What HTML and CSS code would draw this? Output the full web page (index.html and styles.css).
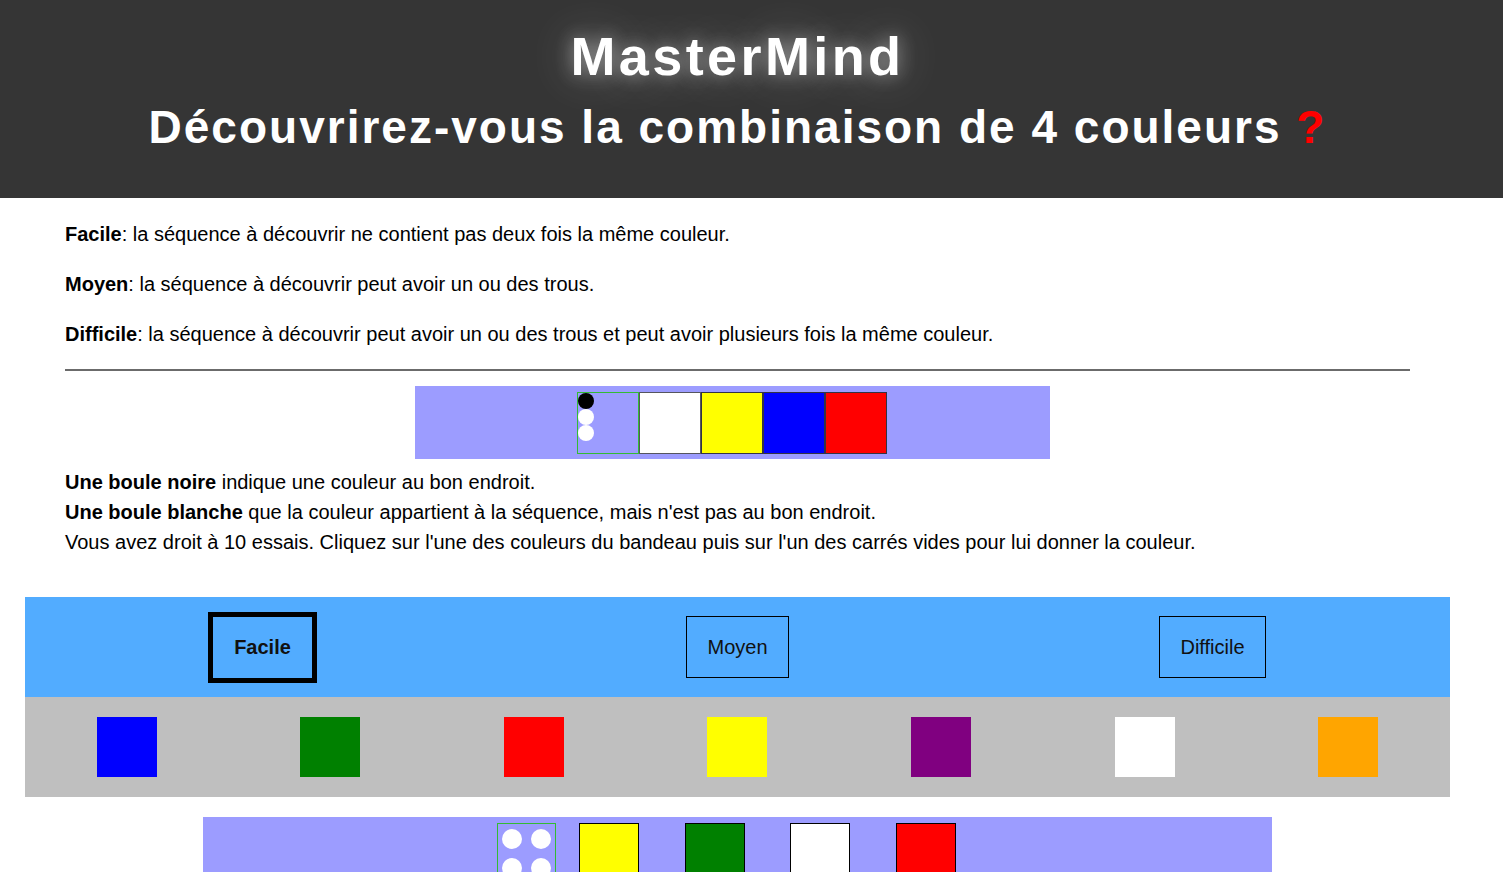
FILE: index.html
```html
<!DOCTYPE html>
<html lang="fr">
<head>
<meta charset="utf-8">
<title>MasterMind</title>
<link rel="stylesheet" href="styles.css">
</head>
<body>
<header class="top">
  <div class="top-inner">
    <h1 class="title">MasterMind</h1>
    <h2 class="subtitle">Découvrirez-vous la combinaison de 4 couleurs <span class="q">?</span></h2>
  </div>
</header>
<main class="page">
  <section class="rules">
    <p class="rule"><b>Facile</b>: la séquence à découvrir ne contient pas deux fois la même couleur.</p>
    <p class="rule"><b>Moyen</b>: la séquence à découvrir peut avoir un ou des trous.</p>
    <p class="rule"><b>Difficile</b>: la séquence à découvrir peut avoir un ou des trous et peut avoir plusieurs fois la même couleur.</p>
    <hr class="sep">
    <div class="example">
      <div class="ex-feedback">
        <span class="ex-ball ball-black"></span>
        <span class="ex-ball ball-white"></span>
        <span class="ex-ball ball-white"></span>
      </div>
      <div class="ex-peg c-white"></div>
      <div class="ex-peg c-yellow"></div>
      <div class="ex-peg c-blue"></div>
      <div class="ex-peg c-red"></div>
    </div>
    <p class="legend"><b>Une boule noire</b> indique une couleur au bon endroit.<br><b>Une boule blanche</b> que la couleur appartient à la séquence, mais n'est pas au bon endroit.<br>Vous avez droit à 10 essais. Cliquez sur l'une des couleurs du bandeau puis sur l'un des carrés vides pour lui donner la couleur.</p>
  </section>

  <nav class="levels">
    <div class="level-cell"><button class="level level-active">Facile</button></div>
    <div class="level-cell"><button class="level">Moyen</button></div>
    <div class="level-cell"><button class="level">Difficile</button></div>
  </nav>

  <div class="palette">
    <div class="swatch-cell"><div class="swatch c-blue"></div></div>
    <div class="swatch-cell"><div class="swatch c-green"></div></div>
    <div class="swatch-cell"><div class="swatch c-red"></div></div>
    <div class="swatch-cell"><div class="swatch c-yellow"></div></div>
    <div class="swatch-cell"><div class="swatch c-purple"></div></div>
    <div class="swatch-cell"><div class="swatch c-white"></div></div>
    <div class="swatch-cell"><div class="swatch c-orange"></div></div>
  </div>

  <div class="board">
    <div class="board-row">
      <div class="feedback">
        <span class="fb-ball ball-white"></span>
        <span class="fb-ball ball-white"></span>
        <span class="fb-ball ball-white"></span>
        <span class="fb-ball ball-white"></span>
      </div>
      <div class="peg c-yellow"></div>
      <div class="peg c-green"></div>
      <div class="peg c-white"></div>
      <div class="peg c-red"></div>
    </div>
    <div class="board-row">
      <div class="feedback"></div>
      <div class="peg c-empty"></div>
      <div class="peg c-empty"></div>
      <div class="peg c-empty"></div>
      <div class="peg c-empty"></div>
    </div>
  </div>
</main>
</body>
</html>
```
FILE: styles.css
```css
* { box-sizing: border-box; }

html, body {
  margin: 0;
  padding: 0;
  background: #ffffff;
  color: #000000;
  font-family: "Liberation Sans", Arial, sans-serif;
}

/* ---------- header ---------- */
.top {
  background: #353535;
  height: 198px;
  overflow: hidden;
}
.top-inner {
  width: 1475px;
  padding-top: 26px;
  text-align: center;
  color: #ffffff;
}
.title {
  margin: 0;
  font-size: 54px;
  line-height: 60px;
  font-weight: bold;
  letter-spacing: 3.4px;
  text-shadow: 0 0 18px rgba(255,255,255,0.45), 0 0 45px rgba(255,255,255,0.35), 0 10px 110px rgba(255,255,255,0.12);
}
.subtitle {
  margin: 13px 0 0;
  font-size: 46px;
  line-height: 56px;
  font-weight: bold;
  letter-spacing: 2px;
}
.q { color: #ff0000; }

/* ---------- page ---------- */
.page {
  width: 1475px;
}
.rules {
  padding: 1px 65px 0;
  font-size: 20px;
  line-height: 30px;
}
.rule {
  margin: 20px 0;
}
.sep {
  margin: 0;
  height: 0;
  border: 0;
  border-top: 2px solid #6b6b6b;
}

/* example row */
.example {
  margin: 15px 0 0 350px;
  width: 635px;
  height: 73px;
  background: #9c9cff;
  padding: 6px 0 0 162px;
  display: flex;
}
.ex-feedback {
  width: 62px;
  height: 62px;
  border: 1px solid #33bb33;
  display: flex;
  flex-direction: column;
}
.ex-ball {
  width: 16px;
  height: 16px;
  border-radius: 50%;
}
.ex-peg {
  width: 62px;
  height: 62px;
  border: 1px solid #333344;
}
.ex-peg.c-white { border-color: #55555f; }

.legend {
  margin: 8px 0 0;
}

.ball-black { background: #000000; }
.ball-white { background: #ffffff; }

/* ---------- level buttons ---------- */
.levels {
  margin: 40px 25px 0;
  height: 100px;
  background: #52acff;
  display: grid;
  grid-template-columns: repeat(3, 1fr);
  align-items: center;
}
.level-cell {
  display: flex;
  justify-content: center;
}
.level {
  font-family: "Liberation Sans", Arial, sans-serif;
  font-size: 20px;
  line-height: 22px;
  color: #111111;
  background: transparent;
  border: 1px solid #000000;
  padding: 19px 20px;
  margin: 0;
}
.level-active {
  border-width: 5px;
  font-weight: bold;
  padding: 19px 21px 20px;
}

/* ---------- palette ---------- */
.palette {
  margin: 0 25px;
  height: 100px;
  background: #bfbfbf;
  display: grid;
  grid-template-columns: repeat(7, 1fr);
  align-items: center;
}
.swatch-cell {
  display: flex;
  justify-content: center;
}
.swatch {
  width: 60px;
  height: 60px;
}

/* ---------- board ---------- */
.board {
  margin: 20px auto 0;
  width: 1069px;
  background: #9c9cff;
  padding: 6px 0 20px 294px;
}
.board-row {
  display: flex;
  gap: 45.7px;
  margin-bottom: 20px;
}
.feedback {
  width: 59px;
  height: 60px;
  border: 1px solid #33bb33;
  padding: 5px 0 0 4px;
  display: grid;
  grid-template-columns: 20px 20px;
  grid-auto-rows: 20px;
  column-gap: 9px;
  row-gap: 9px;
  margin-right: -22.7px;
}
.fb-ball {
  width: 20px;
  height: 20px;
  border-radius: 50%;
}
.peg {
  width: 60px;
  height: 60px;
  border: 1px solid #000000;
}

/* colours */
.c-blue { background: #0000ff; }
.c-green { background: #008000; }
.c-red { background: #ff0000; }
.c-yellow { background: #ffff00; }
.c-purple { background: #800080; }
.c-white { background: #ffffff; }
.c-orange { background: #ffa500; }
.c-empty { background: #9c9cff; }
```
